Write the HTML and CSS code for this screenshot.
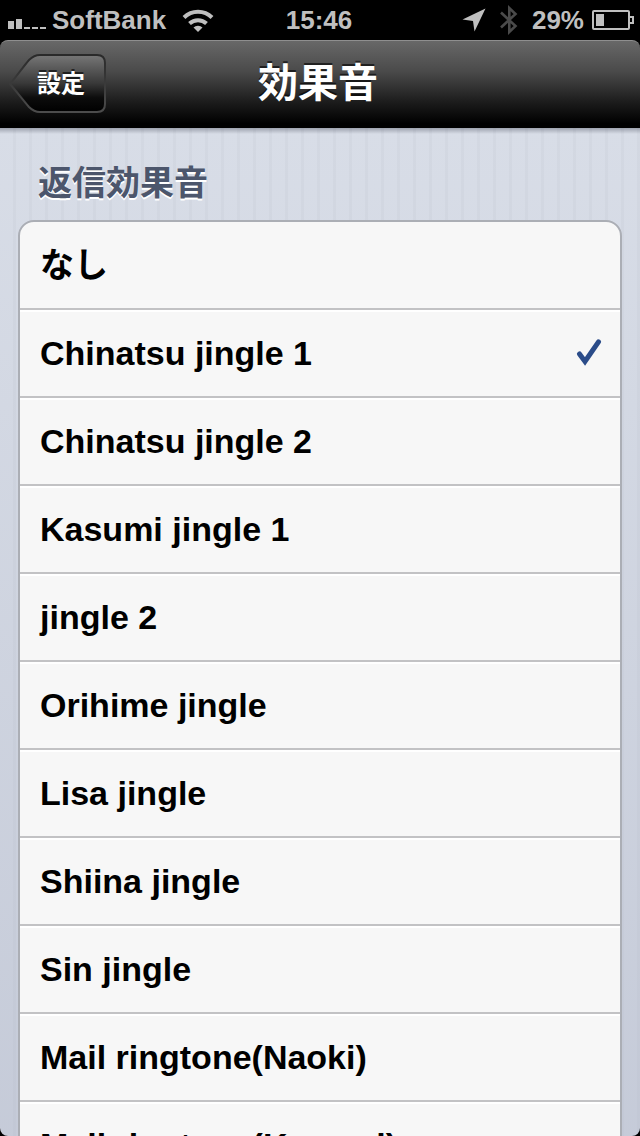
FILE: index.html
```html
<!DOCTYPE html>
<html lang="ja">
<head>
<meta charset="utf-8">
<meta name="viewport" content="width=device-width, initial-scale=1">
<title>効果音</title>
<link rel="stylesheet" href="styles.css">
</head>
<body>
<div class="screen">
  <div class="status">
    <div class="status-side">
      <svg class="signal" width="38" height="12" viewBox="0 0 38 12" fill="#bfbfbf" aria-hidden="true"><path d="M0 4h6v8H0zM8 2h6v10H8zM16 10h6v2h-6zM24 10h6v2h-6zM32 10h6v2h-6z"/></svg>
      <span class="carrier">SoftBank</span>
      <svg class="wifi" width="32" height="24" viewBox="0 0 32 24" aria-hidden="true"><g fill="none" stroke="#bfbfbf" stroke-width="4"><path d="M2 9.500a20 20 0 0 1 28 0"/><path d="M7.500 15.500a12.500 12.500 0 0 1 17 0"/></g><path d="M11.500 19.500a6 5 0 0 1 9 0L16 24z" fill="#bfbfbf"/></svg>
    </div>
    <span class="clock">15:46</span>
    <div class="status-side status-right">
      <svg width="24" height="24" viewBox="0 0 24 24" aria-hidden="true"><path d="M23.500.500L12.500 23.500 11 13 .500 11.500z" fill="#bfbfbf"/></svg>
      <svg class="bluetooth" width="18" height="32" viewBox="0 0 18 32" fill="none" stroke="#4a4a4a" stroke-width="2.600" aria-hidden="true"><path d="M1 8.500L15.500 22 9.300 28V4l6.200 6L1 23.500"/></svg>
      <span class="percent">29%</span>
      <svg width="42" height="20" viewBox="0 0 42 20" aria-hidden="true"><g fill="none" stroke="#bfbfbf" stroke-width="2"><rect x="1" y="1" width="36" height="18" rx="1"/><path d="M37 7h4v6h-4"/></g><path d="M4 4h8v12H4z" fill="#bfbfbf"/></svg>
    </div>
  </div>
  <header class="nav">
    <button class="back" type="button">
      <svg class="back-shape" viewBox="0 0 98 62" aria-hidden="true">
        <defs>
          <linearGradient id="face" x1="0" y1="0" x2="0" y2="1"><stop offset="0" stop-color="#777"/><stop offset=".5" stop-color="#383838"/><stop offset=".75" stop-color="#0c0c0c"/><stop offset="1" stop-color="#000"/></linearGradient>
          <linearGradient id="edge" x1="0" y1="0" x2="0" y2="1"><stop offset="0" stop-color="#2a2a2a"/><stop offset=".5" stop-color="#3a3a3a"/><stop offset="1" stop-color="#4c4c4c"/></linearGradient>
        </defs>
        <path d="M2 31C9 23 15 14 21 7Q26 2 32 2H89Q97 2 97 10V51Q97 59 89 59H32Q26 59 21 54C15 47 9 39 2 31Z" fill="url(#face)" stroke="url(#edge)" stroke-width="2"/>
      </svg>
      <span class="back-label">設定</span>
    </button>
    <h1 class="title">効果音</h1>
  </header>
  <main class="content">
    <fieldset class="group">
      <legend class="heading">返信効果音</legend>
      <div class="list">
        <label class="row"><input class="choice" type="radio" name="sound"><span>なし</span></label>
        <label class="row"><input class="choice" type="radio" name="sound" checked><span>Chinatsu jingle 1</span><svg class="check" width="26" height="28" viewBox="0 0 26 28" aria-hidden="true"><path d="M3.500 15L9 22.500 22.500 2.800" fill="none" stroke="#2b4c89" stroke-width="5" stroke-linecap="round" stroke-linejoin="miter"/></svg></label>
        <label class="row"><input class="choice" type="radio" name="sound"><span>Chinatsu jingle 2</span></label>
        <label class="row"><input class="choice" type="radio" name="sound"><span>Kasumi jingle 1</span></label>
        <label class="row"><input class="choice" type="radio" name="sound"><span>jingle 2</span></label>
        <label class="row"><input class="choice" type="radio" name="sound"><span>Orihime jingle</span></label>
        <label class="row"><input class="choice" type="radio" name="sound"><span>Lisa jingle</span></label>
        <label class="row"><input class="choice" type="radio" name="sound"><span>Shiina jingle</span></label>
        <label class="row"><input class="choice" type="radio" name="sound"><span>Sin jingle</span></label>
        <label class="row"><input class="choice" type="radio" name="sound"><span>Mail ringtone(Naoki)</span></label>
        <label class="row"><input class="choice" type="radio" name="sound"><span>Mail ringtone(Kasumi)</span></label>
      </div>
    </fieldset>
  </main>
</div>
</body>
</html>
```

FILE: styles.css
```css
* { box-sizing: border-box; }

body {
  margin: 0;
  background: #000;
  font-family: "Liberation Sans", "Noto Sans CJK JP", sans-serif;
  font-weight: bold;
}

.screen {
  display: flex;
  flex-direction: column;
  height: 100vh;
  overflow: hidden;
}

.status {
  display: grid;
  grid-template-columns: 1fr auto 1fr;
  align-items: center;
  flex: none;
  height: 40px;
  padding: 0 6px 0 8px;
  background: #000;
  color: #bfbfbf;
  font-size: 26px;
  line-height: 40px;
}

.status-side { display: flex; align-items: center; }
.status-right { justify-content: flex-end; }
.signal { margin: 6px 6px 0 0; }
.carrier { margin-right: 16px; }
.clock { padding-right: 4px; }
.bluetooth { margin: 0 14px 0 14px; }
.percent { margin-right: 8px; }

.nav {
  display: grid;
  grid-template-columns: 1fr auto 1fr;
  align-items: center;
  flex: none;
  height: 88px;
  padding: 0 12px 2px 8px;
  border-top: 1px solid #8f8f8f;
  border-radius: 8px 8px 0 0;
  background: linear-gradient(#686868, #4a4a4a 35%, #1c1c1c 70%, #000 95%);
  color: #fff;
}

.back {
  display: grid;
  align-items: center;
  justify-self: start;
  width: 98px;
  padding: 0;
  border: 0;
  background: none;
  color: inherit;
  font: bold 24px "Liberation Sans", "Noto Sans CJK JP", sans-serif;
  cursor: pointer;
}

.back-shape, .back-label { grid-area: 1 / 1; }
.back-label {
  padding-left: 8px;
  line-height: 56px;
  text-shadow: 0 -2px 0 rgba(0, 0, 0, .6);
}

.title {
  margin: 0;
  padding-bottom: 2px;
  font-size: 40px;
  line-height: 80px;
  text-shadow: 0 -2px 0 rgba(0, 0, 0, .6);
}

.content {
  flex: 1;
  min-height: 0;
  overflow: hidden;
  padding: 29px 18px 0;
  border-radius: 0 0 8px 8px;
  background:
    linear-gradient(rgba(70, 75, 90, .4), transparent 6px),
    linear-gradient(transparent, rgba(170, 176, 195, .4)),
    repeating-linear-gradient(90deg, #d8dde7 0 13px, #d3d8e2 13px 16px);
}

.group { min-width: 0; margin: 0; padding: 0; border: 0; }

.heading {
  padding: 0 20px;
  color: #4c566c;
  font-size: 34px;
  line-height: 52px;
  margin-bottom: 11px;
  text-shadow: 0 2px 0 #fff;
}

.list {
  border: 2px solid #abaeb5;
  border-radius: 16px;
  background: #f7f7f7;
  overflow: hidden;
}

.row {
  display: flex;
  align-items: center;
  height: 88px;
  padding: 0 18px 0 20px;
  border-bottom: 2px solid #c2c2c4;
  box-shadow: inset 0 2px 0 #fff;
  color: #000;
  font-size: 34px;
  line-height: 40px;
  cursor: pointer;
}

.row:first-child { box-shadow: none; }

.choice {
  appearance: none;
  width: 0;
  height: 0;
  margin: 0;
}

.check { margin-left: auto; }
```
